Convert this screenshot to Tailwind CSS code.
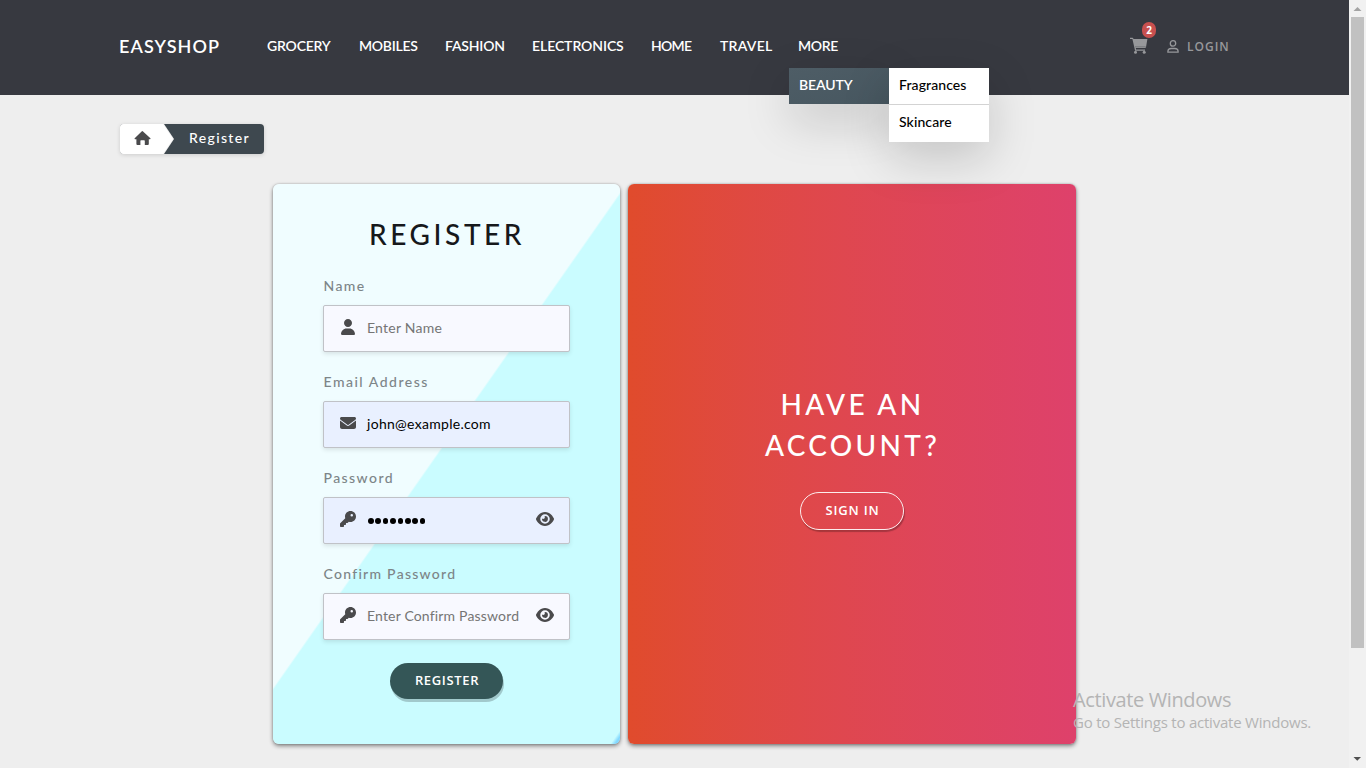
<!DOCTYPE html>
<html lang="en">
<head>
<meta charset="utf-8">
<title>EasyShop - Register</title>
<script src="https://cdn.jsdelivr.net/npm/@tailwindcss/browser@4"></script>
</head>
<body class="relative flex h-[768px] w-[1366px] overflow-hidden bg-[#eeeeee] font-['Lato','Open_Sans',sans-serif]">
<svg class="hidden">
  <symbol id="key" viewBox="0 0 512 512"><path d="M336 352c97.2 0 176-78.8 176-176S433.2 0 336 0S160 78.8 160 176c0 18.7 2.9 36.8 8.3 53.7L7 391c-4.5 4.5-7 10.6-7 17v80c0 13.3 10.7 24 24 24h80c13.3 0 24-10.7 24-24V448h40c13.3 0 24-10.7 24-24V384h40c6.4 0 12.5-2.5 17-7l33.3-33.3c16.9 5.4 35 8.3 53.7 8.3zM376 96a40 40 0 1 1 0 80 40 40 0 1 1 0-80z"/></symbol>
  <symbol id="eye" viewBox="0 0 576 512"><path fill-rule="evenodd" d="M288 32c-80.8 0-145.500 36.800-192.600 80.600C48.600 156 17.300 208 2.500 243.700c-3.300 7.900-3.300 16.700 0 24.600C17.300 304 48.600 356 95.400 399.400C142.500 443.200 207.200 480 288 480s145.500-36.800 192.600-80.600c46.800-43.500 78.100-95.400 93-131.100c3.300-7.900 3.300-16.700 0-24.600c-14.900-35.700-46.200-87.700-93-131.100C433.500 68.800 368.800 32 288 32zM136 256a152 152 0 1 1 304 0 152 152 0 1 1 -304 0z"/><path d="M288 160q-8 0-16 2q16 24 8 50t-32 38q-28 10-54-8a94 94 0 1 0 94-82z"/></symbol>
</svg>

<div class="flex w-[1349px] shrink-0 flex-col">
  <nav class="flex h-[95px] shrink-0 bg-[#373940] pl-[119px] text-white">
    <a class="mt-[34px] h-6 w-[148px] text-[18px] leading-6 font-semibold tracking-[1.100px]">EASYSHOP</a>
    <div class="mt-9 flex h-5 text-[14px] leading-5 font-semibold whitespace-nowrap">
      <a class="w-[92px] tracking-[-0.200px]">GROCERY</a>
      <a class="w-[86px] tracking-[-0.270px]">MOBILES</a>
      <a class="w-[87px] tracking-[-0.200px]">FASHION</a>
      <a class="w-[119px] tracking-[-0.080px]">ELECTRONICS</a>
      <a class="w-[69px] tracking-[-0.700px]">HOME</a>
      <a class="w-[78px] tracking-[0.250px]">TRAVEL</a>
      <div class="relative w-[332px] tracking-[-0.300px]">MORE
        <div class="absolute top-8 left-[-9px] z-10 flex items-start">
          <div class="h-9 w-[100px] bg-[#4c5962] bg-linear-to-br from-[#4e5d66] to-[#475760] pl-[10px] leading-[34px] tracking-[-0.100px] shadow-[0_16px_48px_rgba(0,0,0,0.176)]">BEAUTY</div>
          <div class="h-[74px] w-[100px] bg-white font-medium tracking-[0.100px] text-black shadow-[0_16px_48px_rgba(0,0,0,0.176)]">
            <div class="h-[37px] border-b border-[#d3d3d3] pl-[10px] leading-[34px]">Fragrances</div>
            <div class="h-[37px] pl-[10px] leading-[34px]">Skincare</div>
          </div>
        </div>
      </div>
    </div>
    <div class="flex text-[#97989b]">
      <div class="relative mt-[37px] h-[18px] w-[37px]">
        <svg class="h-[17px] w-[18px]" viewBox="0 0 18 17" fill="currentColor"><path d="M0 .8h2.500c.4 0 .7.2.8.6l.2.6h13.900L16 10.200c-.1.5-.5.8-1 .8H5.800l.3 1.500H15v1.300H5.100L2.400 2.100H0z"/><circle cx="5.500" cy="15.200" r="1.500"/><circle cx="14.200" cy="15.200" r="1.500"/><path d="M5 9.800h10.800" stroke="#55575d" stroke-width=".5"/></svg>
        <span class="absolute top-[-15px] left-3 flex h-4 w-[14px] items-center justify-center rounded-full bg-[#c8504f] font-['Open_Sans'] text-[10px] font-bold tracking-normal text-white">2</span>
      </div>
      <svg class="mt-10 mr-2 h-[13px] w-3" viewBox="0 0 12 13" fill="none" stroke="currentColor" stroke-width="1.300"><circle cx="6" cy="3.400" r="2.700"/><path d="M.9 12.200v-.6c0-1.900 1.500-3.100 3.300-3.100h3.600c1.800 0 3.300 1.200 3.300 3.100v.6z"/></svg>
      <span class="mt-[37px] h-5 font-['Open_Sans'] text-[12px] leading-5 font-semibold tracking-[1px]">LOGIN</span>
    </div>
  </nav>

  <main class="flex flex-col">
    <div class="mt-[29px] ml-[120px] flex h-[30px] w-36 rounded bg-[#3e484f] shadow-[0_1px_4px_rgba(0,0,0,0.14)]">
      <svg class="h-[30px] w-[54px]" viewBox="0 0 54 30"><path d="M4 0H44L54 15 44 30H4Q0 30 0 26V4Q0 0 4 0z" fill="#f0f0f0"/><path d="M4 0H43L53 15 43 30H4Q0 30 0 26V4Q0 0 4 0z" fill="#fff"/><path d="M22.500 7 30.400 14.300Q31 15.200 29.800 15.200H28.800V20Q28.800 21 27.800 21H24.800V16.900Q24.800 16.300 24.200 16.300H21Q20.400 16.300 20.400 16.900V21H17.400Q16.400 21 16.400 20V15.200H15.200Q14 15.200 14.700 14.300L21.600 7.500Q22 7 22.500 7z" fill="#4a4a4c"/></svg>
      <span class="ml-[15px] text-[14px] leading-7 font-medium tracking-[1.350px] text-white">Register</span>
    </div>

    <div class="mt-[30px] ml-[273px] flex gap-2">
      <form class="flex h-[560px] w-[347px] flex-col rounded-md bg-[linear-gradient(125deg,#f0fdff_0%,#f0fdff_47.700%,#cafcff_48%,#cafcff_98.700%,#82d8ff_99.300%)] px-[50px] shadow-[0_2px_4px_rgba(0,0,0,0.45),0_0_2px_rgba(0,0,0,0.25)]">
        <h1 class="mt-[30px] h-10 pl-px text-center text-[28px] leading-10 font-medium tracking-[3.600px] text-[#16181b]">REGISTER</h1>

        <label class="mt-[22px] h-[29px] pl-[0.500px] text-[14px] leading-5 font-medium tracking-[1.400px] text-[#7d8588]">Name</label>
        <div class="flex h-[47px] rounded-xs border border-[#c0c2c7] bg-[#f8f9ff] shadow-[0_2px_4px_rgba(0,0,0,0.1)]">
          <svg class="mt-[13px] ml-[17px] h-4 w-[14px]" viewBox="0 0 448 512" fill="#4a4a4c"><path d="M224 256c70.700 0 128-57.300 128-128S294.700 0 224 0 96 57.300 96 128s57.300 128 128 128zm-45.700 48C79.800 304 0 383.800 0 482.300C0 498.700 13.300 512 29.700 512H418.300c16.400 0 29.700-13.300 29.700-29.700C448 383.800 368.200 304 269.700 304H178.300z"/></svg>
          <span class="ml-3 text-[14px] leading-[43px] tracking-[0.230px] text-[#757575]">Enter Name</span>
        </div>

        <label class="mt-5 h-[29px] pl-[0.500px] text-[14px] leading-5 font-medium tracking-[1.500px] text-[#7d8588]">Email Address</label>
        <div class="flex h-[47px] rounded-xs border border-[#c0c2c7] bg-[#e9f0ff] shadow-[0_2px_4px_rgba(0,0,0,0.1)]">
          <svg class="mt-[13px] ml-4 h-4 w-4" viewBox="0 0 512 512" fill="#4a4a4c"><path d="M48 64C21.500 64 0 85.500 0 112c0 15.100 7.100 29.300 19.200 38.400L236.800 313.600c11.400 8.500 27 8.500 38.400 0L492.800 150.400c12.100-9.100 19.200-23.300 19.200-38.400c0-26.500-21.500-48-48-48H48zM0 176V384c0 35.300 28.700 64 64 64H448c35.300 0 64-28.700 64-64V176L294.400 339.200c-22.800 17.100-54 17.100-76.800 0L0 176z"/></svg>
          <span class="ml-[11px] text-[14px] leading-[43px] tracking-[0.290px] text-black">john@example.com</span>
        </div>

        <label class="mt-5 h-[29px] pl-[0.500px] text-[14px] leading-5 font-medium tracking-[1.430px] text-[#7d8588]">Password</label>
        <div class="flex h-[47px] rounded-xs border border-[#c0c2c7] bg-[#e9f0ff] shadow-[0_2px_4px_rgba(0,0,0,0.1)]">
          <svg class="mt-[13px] ml-4 h-4 w-4" fill="#4a4a4c"><use href="#key"/></svg>
          <div class="mt-5 ml-3 flex gap-[1.800px]">
            <i class="size-[5.600px] rounded-full bg-black"></i><i class="size-[5.600px] rounded-full bg-black"></i><i class="size-[5.600px] rounded-full bg-black"></i><i class="size-[5.600px] rounded-full bg-black"></i><i class="size-[5.600px] rounded-full bg-black"></i><i class="size-[5.600px] rounded-full bg-black"></i><i class="size-[5.600px] rounded-full bg-black"></i><i class="size-[5.600px] rounded-full bg-black"></i>
          </div>
          <svg class="mt-[13px] mr-[15px] ml-auto h-4 w-[18px]" fill="#4a4a4c"><use href="#eye"/></svg>
        </div>

        <label class="mt-5 h-[29px] pl-[0.500px] text-[14px] leading-5 font-medium tracking-[1.270px] text-[#7d8588]">Confirm Password</label>
        <div class="flex h-[47px] rounded-xs border border-[#c0c2c7] bg-[#f8f9ff] shadow-[0_2px_4px_rgba(0,0,0,0.1)]">
          <svg class="mt-[13px] ml-4 h-4 w-4" fill="#4a4a4c"><use href="#key"/></svg>
          <span class="ml-[11px] text-[14px] leading-[43px] tracking-[0.170px] text-[#757575]">Enter Confirm Password</span>
          <svg class="mt-[13px] mr-[15px] ml-auto h-4 w-[18px]" fill="#4a4a4c"><use href="#eye"/></svg>
        </div>

        <button class="mt-[23px] ml-[67px] h-9 w-[113px] rounded-full bg-[#345657] pl-px font-['Open_Sans'] text-[13px] font-semibold tracking-[0.650px] text-white shadow-[1px_3px_0_rgba(0,0,0,0.2)]">REGISTER</button>
      </form>

      <section class="flex h-[560px] w-[448px] flex-col items-center rounded-md bg-linear-to-r from-[#e04b2c] to-[#de416b] shadow-[0_2px_4px_rgba(0,0,0,0.45),0_0_2px_rgba(0,0,0,0.25)]">
        <h2 class="mt-[200px] pl-px text-center text-[28px] leading-[41px] font-medium tracking-[3.300px] text-white">HAVE AN<br>ACCOUNT?</h2>
        <button class="mt-[26px] h-[38px] w-[104px] rounded-full border border-white/90 pl-px font-['Open_Sans'] text-[13px] font-semibold tracking-[0.800px] text-white shadow-[1px_2px_1px_rgba(0,0,0,0.25)]">SIGN IN</button>
      </section>
    </div>
  </main>
</div>

<aside class="flex w-[17px] shrink-0 flex-col items-center bg-[#f1f1f1]">
  <svg class="h-[17px] w-[17px] shrink-0" viewBox="0 0 17 17" fill="#a3a3a3"><path d="M4.500 11 8.500 7l4 4z"/></svg>
  <div class="h-[631px] w-[13px] bg-[#c1c1c1]"></div>
  <svg class="mt-auto h-[17px] w-[17px] shrink-0" viewBox="0 0 17 17" fill="#505050"><path d="M4.500 6h7.500L8.250 9.800z"/></svg>
</aside>

<div class="absolute top-[686px] left-[1073px] font-['Open_Sans'] whitespace-nowrap text-[#b4b4b4]">
  <p class="text-[20px] leading-7 tracking-[-0.380px]">Activate Windows</p>
  <p class="text-[15px] leading-[17px] tracking-[-0.220px]">Go to Settings to activate Windows.</p>
</div>
</body>
</html>
